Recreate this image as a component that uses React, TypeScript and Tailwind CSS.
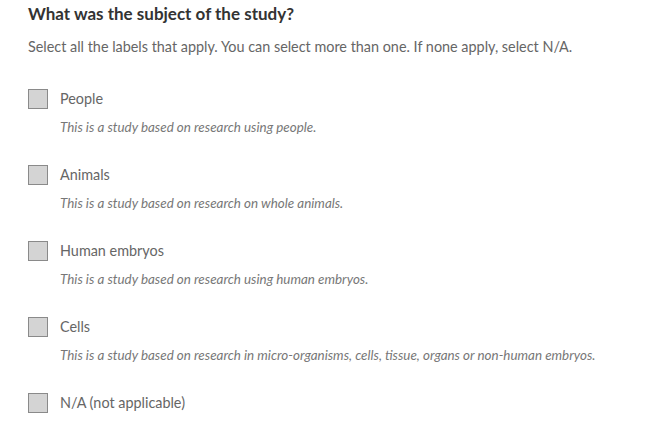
const options = [
  { label: "People", description: "This is a study based on research using people." },
  { label: "Animals", description: "This is a study based on research on whole animals." },
  { label: "Human embryos", description: "This is a study based on research using human embryos." },
  {
    label: "Cells",
    description:
      "This is a study based on research in micro-organisms, cells, tissue, organs or non-human embryos.",
  },
  { label: "N/A (not applicable)" },
];

const App = () => {
  return (
    <div className="min-h-screen bg-white px-[28px] pt-[3px] font-['Lato',sans-serif] text-[#666]">
      <h2 className="text-[17px] font-bold leading-[22px] text-[#333]">What was the subject of the study?</h2>
      <p className="mt-[11px] text-[14.4px] leading-[22px]">
        Select all the labels that apply. You can select more than one. If none apply, select N/A.
      </p>
      <div className="mt-[31px] flex flex-col gap-[28px]">
        {options.map((o) => (
          <label key={o.label} className="flex flex-col">
            <span className="flex items-center gap-[12px]">
              <span className="h-[20px] w-[20px] shrink-0 border border-[#8a8a8a] bg-[#d4d4d4]" />
              <span className="text-[14.4px] leading-[20px]">{o.label}</span>
            </span>
            {o.description && (
              <span className="mt-[8px] pl-[32px] text-[13.4px] italic leading-[20px] text-[#777]">
                {o.description}
              </span>
            )}
          </label>
        ))}
      </div>
    </div>
  );
};

export default App;
